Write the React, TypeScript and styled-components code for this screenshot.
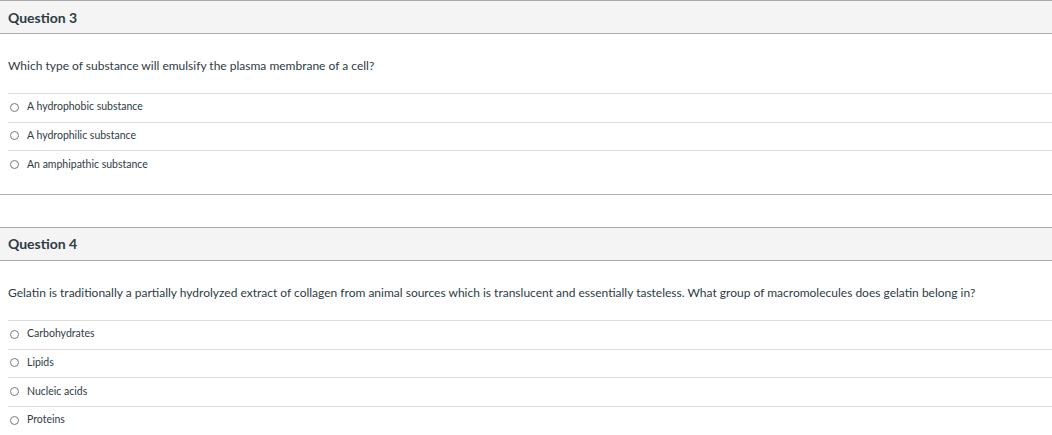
import styled, { createGlobalStyle } from 'styled-components';

const GlobalStyle = createGlobalStyle`
  body {
    margin: 0;
    background: #ffffff;
    font-family: Lato, "Open Sans", "Liberation Sans", sans-serif;
    color: #2d3b45;
  }
`;

const Page = styled.div`
  display: flex;
  flex-direction: column;
  gap: 32px;
`;

const QuestionBlock = styled.section`
  border-bottom: 1px solid #b0b0b0;
  padding-bottom: 15px;
`;

const Header = styled.div`
  height: 32px;
  display: flex;
  align-items: center;
  padding: 0 8px;
  background: #f4f4f4;
  border-top: 1px solid #a9a9a9;
  border-bottom: 1px solid #a9a9a9;
  font-size: 14px;
  font-weight: 700;
  color: #2d3b45;
`;

const QuestionText = styled.p`
  margin: 0;
  padding: 24px 8px 19px;
  font-size: 12px;
  line-height: 16px;
  color: #2d3b45;
`;

const Options = styled.div`
  margin-left: 8px;
`;

const Option = styled.label`
  display: flex;
  align-items: center;
  gap: 8px;
  height: 28.67px;
  box-sizing: border-box;
  border-top: 1px solid #dcdcdc;
  padding: 0 0 3px 2px;
  font-size: 10.5px;
  color: #2d3b45;
`;

const Radio = styled.span`
  width: 7px;
  height: 7px;
  border: 1px solid #7a7a7a;
  border-radius: 50%;
  flex: none;
  margin-top: 2px;
`;

type Question = {
  title: string;
  text: string;
  answers: string[];
};

const questions: Question[] = [
  {
    title: 'Question 3',
    text: 'Which type of substance will emulsify the plasma membrane of a cell?',
    answers: ['A hydrophobic substance', 'A hydrophilic substance', 'An amphipathic substance'],
  },
  {
    title: 'Question 4',
    text: 'Gelatin is traditionally a partially hydrolyzed extract of collagen from animal sources which is translucent and essentially tasteless. What group of macromolecules does gelatin belong in?',
    answers: ['Carbohydrates', 'Lipids', 'Nucleic acids', 'Proteins'],
  },
];

function App() {
  return (
    <>
      <GlobalStyle />
      <Page>
        {questions.map((q) => (
          <QuestionBlock key={q.title}>
            <Header>{q.title}</Header>
            <QuestionText>{q.text}</QuestionText>
            <Options>
              {q.answers.map((a) => (
                <Option key={a}>
                  <Radio />
                  {a}
                </Option>
              ))}
            </Options>
          </QuestionBlock>
        ))}
      </Page>
    </>
  );
}

export default App;
